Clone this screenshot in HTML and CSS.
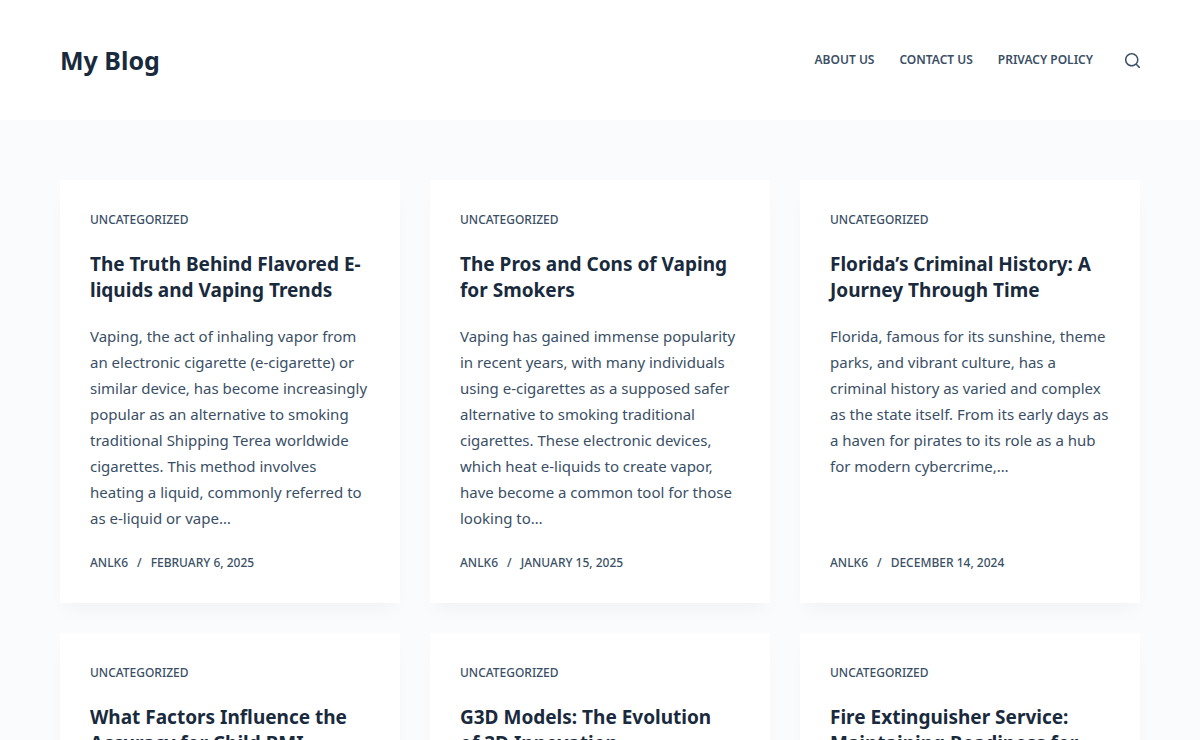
FILE: index.html
```html
<!DOCTYPE html>
<html lang="en">
<head>
<meta charset="utf-8">
<meta name="viewport" content="width=device-width, initial-scale=1">
<title>My Blog</title>
<link rel="stylesheet" href="styles.css">
</head>
<body>
<header class="site-header">
  <div class="container header-row">
    <a class="site-title" href="#">My Blog</a>
    <div class="header-end">
      <nav class="menu" aria-label="Main">
        <a href="#">About Us</a>
        <a href="#">Contact Us</a>
        <a href="#">Privacy Policy</a>
      </nav>
      <button class="search" type="button" aria-label="Search">
        <svg viewBox="0 0 15 15" width="15" height="15" aria-hidden="true"><path d="M14.8 13.7 12 11c.9-1.2 1.5-2.6 1.5-4.2 0-3.7-3-6.8-6.8-6.8S0 3 0 6.8s3 6.8 6.8 6.8c1.6 0 3.1-.6 4.2-1.5l2.8 2.8c.1.1.3.2.5.2s.4-.1.5-.2c.3-.4.3-.9 0-1.2zM1.5 6.8c0-2.9 2.4-5.2 5.2-5.2S12 3.9 12 6.8 9.6 12 6.8 12 1.5 9.6 1.5 6.8z"/></svg>
      </button>
    </div>
  </div>
</header>
<main class="container posts">
  <article class="card">
    <a class="category" href="#">Uncategorized</a>
    <h2><a href="#">The Truth Behind Flavored E-liquids and Vaping Trends</a></h2>
    <p>Vaping, the act of inhaling vapor from an electronic cigarette (e-cigarette) or similar device, has become increasingly popular as an alternative to smoking traditional Shipping Terea worldwide cigarettes. This method involves heating a liquid, commonly referred to as e-liquid or vape…</p>
    <div class="meta"><a href="#">anlk6</a><span>/</span><time datetime="2025-02-06">February 6, 2025</time></div>
  </article>
  <article class="card">
    <a class="category" href="#">Uncategorized</a>
    <h2><a href="#">The Pros and Cons of Vaping for Smokers</a></h2>
    <p>Vaping has gained immense popularity in recent years, with many individuals using e-cigarettes as a supposed safer alternative to smoking traditional cigarettes. These electronic devices, which heat e-liquids to create vapor, have become a common tool for those looking to…</p>
    <div class="meta"><a href="#">anlk6</a><span>/</span><time datetime="2025-01-15">January 15, 2025</time></div>
  </article>
  <article class="card">
    <a class="category" href="#">Uncategorized</a>
    <h2><a href="#">Florida’s Criminal History: A Journey Through Time</a></h2>
    <p>Florida, famous for its sunshine, theme parks, and vibrant culture, has a criminal history as varied and complex as the state itself. From its early days as a haven for pirates to its role as a hub for modern cybercrime,…</p>
    <div class="meta"><a href="#">anlk6</a><span>/</span><time datetime="2024-12-14">December 14, 2024</time></div>
  </article>
  <article class="card">
    <a class="category" href="#">Uncategorized</a>
    <h2><a href="#">What Factors Influence the Accuracy for Child BMI</a></h2>
  </article>
  <article class="card">
    <a class="category" href="#">Uncategorized</a>
    <h2><a href="#">G3D Models: The Evolution of&nbsp;3D Innovation</a></h2>
  </article>
  <article class="card">
    <a class="category" href="#">Uncategorized</a>
    <h2><a href="#">Fire Extinguisher Service: Maintaining Readiness for</a></h2>
  </article>
</main>
</body>
</html>
```
FILE: styles.css
```css
* { box-sizing: border-box; }
html { overflow-x: hidden; scrollbar-width: none; }
body {
  margin: 0;
  background: #fafbfd;
  color: #3a4f66;
  font-family: "Noto Sans", sans-serif;
  font-size: 15px;
}
a { color: inherit; text-decoration: none; }
.container { max-width: 1290px; margin: 0 auto; padding: 0 60px; }
.site-header { background: #fff; }
.header-row {
  display: flex;
  align-items: center;
  justify-content: space-between;
  min-height: 120px;
}
.site-title { color: #192a3d; font-size: 25px; font-weight: 700; }
.header-end { display: flex; align-items: center; gap: 32px; }
.menu { display: flex; gap: 25px; padding-bottom: 2px; }
.menu a { font-size: 12px; font-weight: 600; text-transform: uppercase; }
.search { display: flex; padding: 0; border: 0; background: none; color: #3a4f66; }
.search svg { fill: currentColor; }
.posts {
  display: grid;
  grid-template-columns: repeat(3, minmax(0, 1fr));
  gap: 30px;
  padding-top: 60px;
  padding-bottom: 60px;
}
.card {
  display: flex;
  flex-direction: column;
  padding: 30px;
  background: #fff;
  box-shadow: 0 12px 18px -6px rgba(0, 0, 0, 0.04);
}
.category,
.meta { font-size: 12px; line-height: 20px; font-weight: 500; text-transform: uppercase; }
h2 { margin: 21px 0 20px; color: #192a3d; font-size: 19px; line-height: 26px; font-weight: 700; }
p { margin: 0 0 22px; line-height: 26px; }
.meta { display: flex; gap: 9px; margin-top: auto; }
```
